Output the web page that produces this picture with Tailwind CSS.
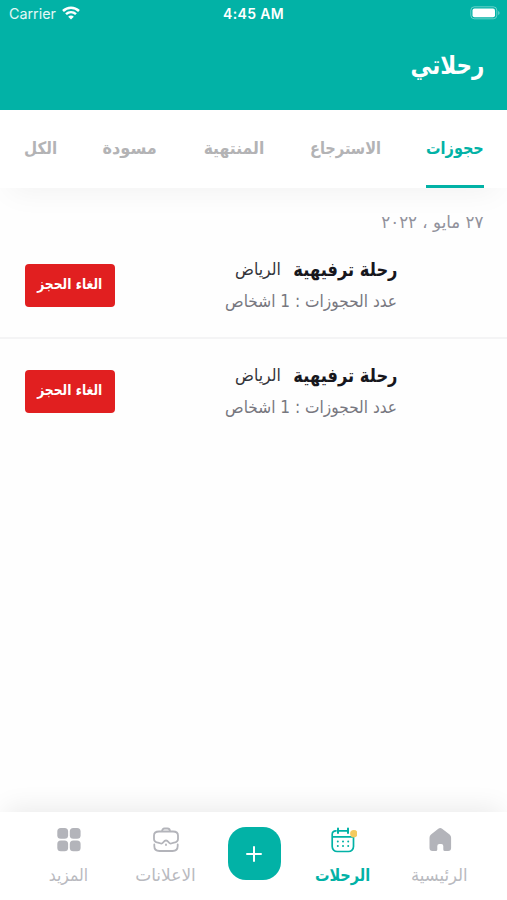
<!DOCTYPE html>
<html lang="ar" dir="rtl">
<head>
<meta charset="utf-8">
<meta name="viewport" content="width=device-width">
<title>رحلاتي</title>
<script src="https://cdn.jsdelivr.net/npm/@tailwindcss/browser@4"></script>
</head>
<body class="bg-white">
<div class="flex h-[900px] w-[507px] flex-col overflow-hidden bg-[#fefefe] font-['DejaVu_Sans',sans-serif]">
  <header class="flex h-[110px] shrink-0 flex-col bg-[#02b2a6] text-white">
    <div dir="ltr" class="grid h-7 grid-cols-3 items-center ps-[9px] pe-[7px] font-['Inter',sans-serif]">
      <div class="flex items-center gap-[6px]">
        <span class="text-[14.3px] text-white/90">Carrier</span>
        <svg class="-mt-[2px] h-[14px] w-[18px]" viewBox="0 0 18 14" fill="none" stroke="white" stroke-width="2.5"><path d="M1 5C5.500.7 12.500.7 17 5M4 8.200c2.900-2.700 7.100-2.700 10 0"/><path d="M9 13.500 6.200 10.700c1.500-1.500 4.100-1.500 5.600 0Z" fill="white" stroke="none"/></svg>
      </div>
      <span class="-mt-[2px] -ms-[2px] text-center text-[14px] font-semibold tracking-[.35px]">4:45 AM</span>
      <svg class="-mt-[2px] h-[14px] w-[30px] justify-self-end" viewBox="0 0 30 14" fill="none"><rect x=".8" y=".8" width="26" height="12" rx="3.500" stroke="white" stroke-opacity=".4"/><rect x="2.500" y="2.500" width="22.500" height="8.800" rx="2" fill="white"/><path d="M28.300 5v4c1.600-.7 1.600-3.300 0-4Z" fill="white" fill-opacity=".5"/></svg>
    </div>
    <h1 class="flex flex-1 origin-right scale-x-[.84] items-center pb-[7px] ps-[27px] text-[25.5px] font-bold">رحلاتي</h1>
  </header>

  <nav class="relative z-10 flex h-[78px] shrink-0 justify-between bg-white ps-[23px] pe-[24px] text-[17px] leading-[76px] font-bold whitespace-nowrap text-[#b3b3b5] shadow-[0_14px_30px_-10px_rgba(0,0,0,0.05)]">
    <div class="flex w-[58px] justify-center border-b-3 border-[#02b2a6] text-[#02b2a6]"><span class="scale-x-[.85]">حجوزات</span></div>
    <div class="flex w-[71px] justify-center"><span class="scale-x-[.857]">الاسترجاع</span></div>
    <div class="flex w-[61px] justify-center"><span class="scale-x-[.92]">المنتهية</span></div>
    <div class="flex w-[55px] justify-center"><span class="scale-x-[.95]">مسودة</span></div>
    <div class="flex w-[33px] justify-center"><span class="scale-x-[.89]">الكل</span></div>
  </nav>

  <main class="flex flex-1 flex-col">
    <p class="h-[44px] origin-right scale-x-[.98] px-6 pt-[22px] text-[17px] leading-6 text-[#91919b]">٢٧ مايو ، ٢٠٢٢</p>
    <article class="flex h-[107px] justify-between border-b-2 border-[#f4f4f5] ps-[110px] pe-[25px]">
      <div class="flex flex-col pt-[24px] whitespace-nowrap">
        <div class="flex h-[26px] items-center gap-3"><h2 class="w-[104px] text-[19px] font-bold text-[#17171d]"><span class="inline-block origin-right scale-x-[.857]">رحلة ترفيهية</span></h2><span class="mt-px origin-right scale-x-[.92] text-[17px] text-[#333339]">الرياض</span></div>
        <p class="mt-[7px] h-6 origin-right scale-x-[.905] text-[17px] text-[#77777f]">عدد الحجوزات : 1 اشخاص</p>
      </div>
      <button class="mt-[32px] flex h-[43px] w-[90px] items-center justify-center rounded-[4px] bg-[#e11f20] pb-[2px] text-[15px] font-bold whitespace-nowrap text-white"><span class="scale-x-[.82]">الغاء الحجز</span></button>
    </article>
    <article class="flex h-[107px] justify-between ps-[110px] pe-[25px]">
      <div class="flex flex-col pt-[23px] whitespace-nowrap">
        <div class="flex h-[26px] items-center gap-3"><h2 class="w-[104px] text-[19px] font-bold text-[#17171d]"><span class="inline-block origin-right scale-x-[.857]">رحلة ترفيهية</span></h2><span class="mt-px origin-right scale-x-[.92] text-[17px] text-[#333339]">الرياض</span></div>
        <p class="mt-[7px] h-6 origin-right scale-x-[.905] text-[17px] text-[#77777f]">عدد الحجوزات : 1 اشخاص</p>
      </div>
      <button class="mt-[31px] flex h-[43px] w-[90px] items-center justify-center rounded-[4px] bg-[#e11f20] pb-[2px] text-[15px] font-bold whitespace-nowrap text-white"><span class="scale-x-[.82]">الغاء الحجز</span></button>
    </article>
  </main>

  <footer class="grid h-[88px] shrink-0 grid-cols-[97px_97px_80px_97px_97px] justify-center bg-white ps-0 pe-[1px] pt-[14px] text-[17px] leading-6 whitespace-nowrap text-[#b9babf] shadow-[0_-10px_24px_-6px_rgba(0,0,0,0.08)]">
    <a class="flex flex-col items-center gap-[9px]">
      <svg class="h-7 w-7" viewBox="0 0 28 28" fill="#b3b4ba"><path d="M12.300 2.800a3 3 0 0 1 3.800 0l7.500 5.800a4 4 0 0 1 1.500 3.200V22a3 3 0 0 1-3 3h-3.300a1.500 1.500 0 0 1-1.500-1.500V20a2 2 0 0 0-2-2h-2a2 2 0 0 0-2 2v3.500a1.500 1.500 0 0 1-1.500 1.500H6.500a3 3 0 0 1-3-3V11.800A4 4 0 0 1 5 8.600Z"/></svg>
      <span class="scale-x-[.97]">الرئيسية</span>
    </a>
    <a class="flex flex-col items-center gap-[9px] font-bold text-[#02b2a6]">
      <svg class="h-7 w-7" viewBox="0 0 28 28" fill="none" stroke="#02b2a6" stroke-width="1.700" stroke-linecap="round"><path d="M7 4.800C4.500 4.800 3.200 6.300 3.200 8.500V20.500a5 5 0 0 0 5 5h11.300a5 5 0 0 0 5-5V9M9 4.800h10M3.200 10.800h21.300"/><path d="M9 2.500v4.500M19 2.500v4.500" stroke-width="2"/><path d="M8.800 15.500h.01M14 15.500h.01M19.200 15.500h.01M8.800 20h.01M14 20h.01M19.200 20h.01" stroke-width="2"/><circle cx="24.800" cy="7.700" r="3.700" fill="#f4ca5f" stroke="none"/></svg>
      <span class="scale-x-[.85]">الرحلات</span>
    </a>
    <button class="mt-[1px] flex h-[53px] w-[53px] items-center justify-center justify-self-center rounded-[18px] bg-[#02b2a6]"><svg class="h-5 w-5" viewBox="0 0 20 20" stroke="white" stroke-width="2" stroke-linecap="round"><path d="M10 3v14M3 10h14"/></svg></button>
    <a class="flex flex-col items-center gap-[9px]">
      <svg class="h-7 w-7" viewBox="0 0 28 28" fill="none" stroke="#b3b4ba" stroke-width="1.800" stroke-linecap="round" stroke-linejoin="round"><path d="M10 5.500c0-2 1-3 2.500-3h3c1.500 0 2.500 1 2.500 3M7 5.500h14c3 0 5 1.500 5 4v3.500c0 2-1.500 3.200-4 3.700l-3 .8c-2.300.5-2.300-3-5-3s-2.700 3.500-5 3L6 16.700c-2.500-.5-4-1.700-4-3.700V9.500c0-2.500 2-4 5-4Z"/><path d="M2.300 18.500v1.500c0 3.500 1.700 5 5.200 5h13c3.500 0 5.200-1.500 5.200-5v-1.500M14 18.300v.8"/></svg>
      <span>الاعلانات</span>
    </a>
    <a class="flex flex-col items-center gap-[9px]">
      <svg class="h-7 w-7" viewBox="0 0 28 28" fill="#b3b4ba"><rect x="2.300" y="2" width="10.800" height="10.800" rx="3.500"/><rect x="14.800" y="2" width="10.800" height="10.800" rx="3.500"/><rect x="2.300" y="14.400" width="10.800" height="10.800" rx="3.500"/><rect x="14.800" y="14.400" width="10.800" height="10.800" rx="3.500"/></svg>
      <span class="scale-x-[.92]">المزيد</span>
    </a>
  </footer>
</div>
</body>
</html>
